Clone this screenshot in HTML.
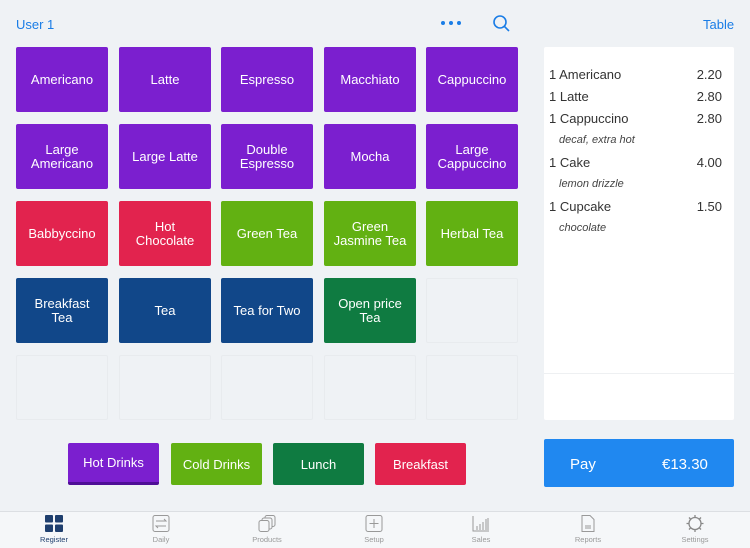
<!DOCTYPE html>
<html><head><meta charset="utf-8"><style>
*{margin:0;padding:0;box-sizing:border-box}
body{width:750px;height:548px;background:#eff2f5;font-family:"Liberation Sans",sans-serif;position:relative;overflow:hidden}
.a{position:absolute}
.t{position:absolute;width:92px;height:65px;border-radius:2px;color:#fff;font-size:13px;line-height:14px;display:flex;align-items:center;justify-content:center;text-align:center}
.p{background:#7b1fcf}.r{background:#e2234e}.g{background:#62b112}.b{background:#114789}.d{background:#0f7b41}
.e{background:#eff2f5;border:1px solid #e8ebee}
.c{position:absolute;top:443px;width:91px;height:42px;border-radius:2px;color:#fff;font-size:13px;display:flex;align-items:center;justify-content:center}
.row{position:absolute;left:549px;width:173px;font-size:13px;color:#333;display:flex;justify-content:space-between}
.note{position:absolute;left:559px;font-size:11px;font-style:italic;color:#444}
.tab{position:absolute;top:515px;width:80px;text-align:center;font-size:7.5px;color:#999}
.tab svg{display:block;margin:0 auto 3px}
</style></head><body>
<div class="a" style="left:16px;top:17px;font-size:13px;color:#1a7de6">User 1</div>
<div class="a" style="left:703px;top:17px;font-size:13px;color:#1a7de6">Table</div>
<svg class="a" style="left:440px;top:18px" width="24" height="10"><circle cx="3" cy="5" r="2" fill="#1a7de6"/><circle cx="11" cy="5" r="2" fill="#1a7de6"/><circle cx="19" cy="5" r="2" fill="#1a7de6"/></svg>
<svg class="a" style="left:492px;top:14px" width="20" height="20"><circle cx="8" cy="8" r="6" fill="none" stroke="#1a7de6" stroke-width="1.6"/><line x1="12.3" y1="12.3" x2="17" y2="17" stroke="#1a7de6" stroke-width="1.6"/></svg>

<div class="t p" style="left:16px;top:47px">Americano</div>
<div class="t p" style="left:119px;top:47px">Latte</div>
<div class="t p" style="left:221px;top:47px">Espresso</div>
<div class="t p" style="left:324px;top:47px">Macchiato</div>
<div class="t p" style="left:426px;top:47px">Cappuccino</div>
<div class="t p" style="left:16px;top:124px">Large<br>Americano</div>
<div class="t p" style="left:119px;top:124px">Large Latte</div>
<div class="t p" style="left:221px;top:124px">Double<br>Espresso</div>
<div class="t p" style="left:324px;top:124px">Mocha</div>
<div class="t p" style="left:426px;top:124px">Large<br>Cappuccino</div>
<div class="t r" style="left:16px;top:201px">Babbyccino</div>
<div class="t r" style="left:119px;top:201px">Hot<br>Chocolate</div>
<div class="t g" style="left:221px;top:201px">Green Tea</div>
<div class="t g" style="left:324px;top:201px">Green<br>Jasmine Tea</div>
<div class="t g" style="left:426px;top:201px">Herbal Tea</div>
<div class="t b" style="left:16px;top:278px">Breakfast<br>Tea</div>
<div class="t b" style="left:119px;top:278px">Tea</div>
<div class="t b" style="left:221px;top:278px">Tea for Two</div>
<div class="t d" style="left:324px;top:278px">Open price<br>Tea</div>
<div class="t e" style="left:426px;top:278px"></div>
<div class="t e" style="left:16px;top:355px"></div>
<div class="t e" style="left:119px;top:355px"></div>
<div class="t e" style="left:221px;top:355px"></div>
<div class="t e" style="left:324px;top:355px"></div>
<div class="t e" style="left:426px;top:355px"></div>

<div class="a" style="left:544px;top:47px;width:190px;height:373px;background:#fff;border-radius:2px"></div>
<div class="a" style="left:544px;top:373px;width:190px;height:1px;background:#eef0f2"></div>
<div class="row" style="top:67px"><span>1 Americano</span><span>2.20</span></div>
<div class="row" style="top:89px"><span>1 Latte</span><span>2.80</span></div>
<div class="row" style="top:111px"><span>1 Cappuccino</span><span>2.80</span></div>
<div class="note" style="top:134px">decaf, extra hot</div>
<div class="row" style="top:155px"><span>1 Cake</span><span>4.00</span></div>
<div class="note" style="top:178px">lemon drizzle</div>
<div class="row" style="top:199px"><span>1 Cupcake</span><span>1.50</span></div>
<div class="note" style="top:222px">chocolate</div>

<div class="c" style="left:68px;background:#7b1fcf;border-bottom:3px solid #4f0f96">Hot Drinks</div>
<div class="c" style="left:171px;background:#62b112">Cold Drinks</div>
<div class="c" style="left:273px;background:#0f7b41">Lunch</div>
<div class="c" style="left:375px;background:#e2234e">Breakfast</div>
<div class="a" style="left:544px;top:439px;width:190px;height:48px;background:#2088f0;border-radius:2px;color:#fff;font-size:15px"><span class="a" style="left:26px;top:17px">Pay</span><span class="a" style="left:118px;top:17px">€13.30</span></div>

<div class="a" style="left:0;top:511px;width:750px;height:37px;background:#f5f7f9;border-top:1px solid #dcdfe3"></div>
<div class="tab" style="left:14px;color:#1f3f6e"><svg width="18" height="17"><rect x="0" y="0" width="8" height="7.5" rx="1" fill="#1f3f6e"/><rect x="10" y="0" width="8" height="7.5" rx="1" fill="#1f3f6e"/><rect x="0" y="9.5" width="8" height="7.5" rx="1" fill="#1f3f6e"/><rect x="10" y="9.5" width="8" height="7.5" rx="1" fill="#1f3f6e"/></svg>Register</div>
<div class="tab" style="left:121px"><svg width="18" height="17"><rect x="1" y="0.5" width="16" height="16" rx="2" fill="none" stroke="#999"/><path d="M4 6h10l-2-2M14 11H4l2 2" fill="none" stroke="#999"/></svg>Daily</div>
<div class="tab" style="left:227px"><svg width="18" height="17"><rect x="7" y="0.5" width="10" height="11" rx="2" fill="#f5f7f9" stroke="#999"/><rect x="4" y="3" width="10" height="11" rx="2" fill="#f5f7f9" stroke="#999"/><rect x="1" y="5.5" width="10" height="11" rx="2" fill="#f5f7f9" stroke="#999"/></svg>Products</div>
<div class="tab" style="left:334px"><svg width="18" height="17"><rect x="1" y="0.5" width="16" height="16" rx="2" fill="none" stroke="#999"/><path d="M9 4v9M4.5 8.5h9" stroke="#999"/></svg>Setup</div>
<div class="tab" style="left:441px"><svg width="18" height="17"><path d="M1 1v15h16M5 15v-4M8 15v-6M11 15v-8M14 15v-11M16 15v-12" fill="none" stroke="#999"/></svg>Sales</div>
<div class="tab" style="left:548px"><svg width="18" height="17"><path d="M3 .5h8l4 4v12H3z" fill="none" stroke="#999"/><path d="M6 11h6M6 13h6" stroke="#999"/></svg>Reports</div>
<div class="tab" style="left:655px"><svg width="18" height="17"><circle cx="9" cy="8.5" r="6" fill="none" stroke="#888" stroke-width="1.3"/><path d="M9 0v3M9 14v3M0.5 8.5h3M14.5 8.5h3M3 2.5l2 2M13 12.5l2 2M15 2.5l-2 2M5 12.5l-2 2" stroke="#888" stroke-width="1.3"/></svg>Settings</div>
</body></html>
